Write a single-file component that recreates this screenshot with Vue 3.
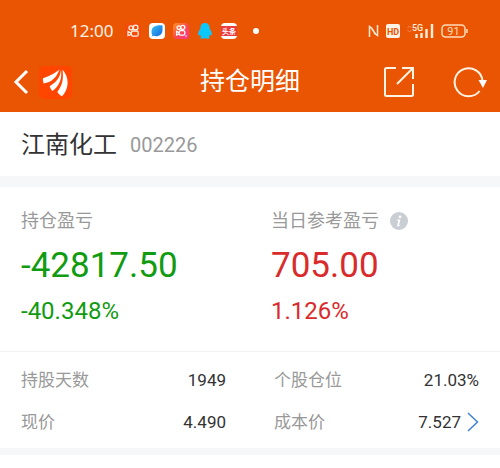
<template>
  <div class="page">
    <header class="header">
      <!-- 状态栏 -->
      <div class="status-bar">
        <div class="status-left">
          <span class="time">12:00</span>
          <div class="app-icons">
            <svg width="16" height="16" viewBox="0 0 16 16">
              <rect width="16" height="16" rx="4" fill="#f54a0c"/>
              <g fill="none" stroke="#fff0df" stroke-width="1.3">
                <circle cx="6" cy="4.8" r="2"/>
                <circle cx="10.6" cy="4.5" r="2.4"/>
                <rect x="6.4" y="8" width="6.8" height="5.2" rx="1.6"/>
                <path d="M6.2 10.2 3 8.6v4l3.2-1.2"/>
              </g>
            </svg>
            <svg width="16" height="16" viewBox="0 0 16 16">
              <defs>
                <linearGradient id="leaf" x1="0" y1="0" x2="1" y2="1">
                  <stop offset="0" stop-color="#35c4f5"/>
                  <stop offset="1" stop-color="#1763dc"/>
                </linearGradient>
              </defs>
              <rect width="16" height="16" rx="4" fill="#fff"/>
              <path d="M13.5 2.5C7 1.8 2.5 4 2.5 8.5c0 1.5.2 2.5.8 3.3l-.8 1.7 2-.7c4.8 1.5 8.5-.8 9-5.300z" fill="url(#leaf)"/>
            </svg>
            <svg width="16" height="16" viewBox="0 0 16 16">
              <defs>
                <linearGradient id="lite" x1="0" y1="0" x2="1" y2="1">
                  <stop offset="0" stop-color="#ff9420"/>
                  <stop offset=".55" stop-color="#fa4651"/>
                  <stop offset="1" stop-color="#f9369b"/>
                </linearGradient>
              </defs>
              <rect width="16" height="16" rx="4" fill="url(#lite)"/>
              <g fill="none" stroke="#fff" stroke-width="1.3">
                <circle cx="5.8" cy="4.7" r="1.8"/>
                <circle cx="9.8" cy="4.4" r="2.1"/>
                <rect x="6.2" y="7.6" width="5.6" height="4.6" rx="1.5"/>
                <path d="M6 9.700 3.600 8.300v3.800L6 11"/>
              </g>
              <circle cx="13" cy="13" r=".8" fill="#fff"/>
            </svg>
            <svg width="16" height="16" viewBox="0 0 16 16">
              <path d="M8 0C5 0 3.300 2.200 3.400 5.500 2 7.500.8 10 1.200 12.300c.3.700 1.100.1 1.800-.8.200 1 .6 1.700 1.200 2.300-1.500.8-1 2 .8 2 1.300 0 2.300-.2 3-.7.700.5 1.700.7 3 .7 1.800 0 2.300-1.200.8-2 .6-.6 1-1.300 1.200-2.300.7.900 1.500 1.500 1.800.8.400-2.300-.8-4.800-2.200-6.800C12.700 2.200 11 0 8 0z" fill="#0bc8fb"/>
            </svg>
            <svg width="16" height="16" viewBox="0 0 16 16">
              <rect width="16" height="16" rx="4" fill="#fff"/>
              <rect y="3" width="16" height="10" fill="#ec3b40"/>
              <text x="8" y="11" text-anchor="middle" class="news-text">头条</text>
            </svg>
          </div>
          <span class="dot"></span>
        </div>
        <div class="status-right">
          <svg width="11" height="14" viewBox="0 0 11 14" fill="none" stroke="#ffe9d3" stroke-width="1.5">
            <path d="M1.500 13V2.500l2 1.500 4 6.500M9.500 1v10.500l-2-1.500-4-6"/>
          </svg>
          <svg width="14" height="14" viewBox="0 0 14 14">
            <rect width="14" height="14" rx="2" fill="#fff3e6"/>
            <text x="7" y="11" text-anchor="middle" class="hd-text">HD</text>
          </svg>
          <svg width="27" height="16" viewBox="0 0 27 16">
            <path d="M.5 5l2-2 2 2M.5 7l2 2 2-2" fill="none" stroke="#f08a4c" stroke-width="1"/>
            <text x="5" y="8" class="net-text">5G</text>
            <path d="M9.500 11v4M14.500 10v5M19.500 6v9M25 1v14" fill="none" stroke="#ffeeda" stroke-width="2.400"/>
          </svg>
          <svg width="27" height="14" viewBox="0 0 27 14">
            <rect x="1" y="1" width="23" height="12" rx="3.5" fill="none" stroke="#ffdcb8" stroke-width="1.5"/>
            <path d="M26 5v4" stroke="#ffdcb8" stroke-width="1.5"/>
            <text x="12.5" y="11" text-anchor="middle" class="battery-text">91</text>
          </svg>
        </div>
      </div>

      <!-- 导航栏 -->
      <div class="nav-bar">
        <div class="nav-side">
          <button type="button" class="icon-btn" aria-label="返回">
            <svg width="16" height="26" viewBox="0 0 16 26" fill="none" stroke="#fff" stroke-width="3">
              <path d="M14 2 3 13l11 11"/>
            </svg>
          </button>
          <svg width="33" height="33" viewBox="0 0 33 33">
            <rect width="33" height="33" rx="5" fill="#ff4500"/>
            <g fill="#fff">
              <path d="M20.500 3.500C14 8.500 9.500 10.500 4 12.200c-.3 1.800 0 3.300.7 5.200C12.500 16.500 17.500 11.500 20.500 3.500z"/>
              <path d="M22 3.500c-.8 8-4.500 12.500-11.300 16.700.5 1.800 1.300 3.300 2.800 4.800C20.500 20 23.300 12.500 22 3.500z"/>
              <path d="M23.500 3.500c1.300 9.500-.2 16-5.200 22.500 1.200 1.800 2.800 3.300 4.800 4.200C30.300 22.500 30.500 11.500 23.500 3.500z"/>
            </g>
          </svg>
        </div>
        <h1 class="nav-title">持仓明细</h1>
        <div class="nav-side nav-actions">
          <button type="button" class="icon-btn" aria-label="分享">
            <svg width="32" height="32" viewBox="0 0 32 32" fill="none" stroke="#fff3e4" stroke-width="2">
              <path d="M13 2H3.500Q2 2 2 3.500v25Q2 30 3.500 30h25q1.500 0 1.500-1.500V18M14 18 30 2M19 2h11v11"/>
            </svg>
          </button>
          <button type="button" class="icon-btn" aria-label="刷新">
            <svg width="34" height="32" viewBox="0 0 34 32">
              <path d="M26.600 25A14 14 0 1 1 29.600 15" fill="none" stroke="#fff3e4" stroke-width="2"/>
              <path d="M25.500 14h8.500l-4 8z" fill="#fff"/>
            </svg>
          </button>
        </div>
      </div>
    </header>

    <section class="stock">
      <h2 class="stock-name">{{ stock.name }}</h2>
      <span class="stock-code">{{ stock.code }}</span>
    </section>

    <main class="position">
      <!-- 盈亏 -->
      <div class="summary">
        <div v-for="item in summary" :key="item.label" class="summary-item" :class="item.trend">
          <div class="summary-label">
            <span>{{ item.label }}</span>
            <button v-if="item.info" type="button" class="icon-btn" aria-label="说明">
              <svg width="18" height="18" viewBox="0 0 18 18">
                <circle cx="9" cy="9" r="9" fill="#c9cdd4"/>
                <circle cx="10" cy="4.8" r="1.4" fill="#fff"/>
                <path d="M7 7.500h3.400L9 13.300l1.500-.6-.3.900q-1.500 1.200-3.200.9l1.300-5.900H6.800z" fill="#fff"/>
              </svg>
            </button>
          </div>
          <div class="amount">{{ item.amount }}</div>
          <div class="percent">{{ item.percent }}</div>
        </div>
      </div>

      <!-- 明细 -->
      <dl class="details">
        <div v-for="item in details" :key="item.label" class="detail">
          <dt>{{ item.label }}</dt>
          <dd>
            {{ item.value }}
            <button v-if="item.more" type="button" class="icon-btn" aria-label="查看成本价">
              <svg width="12" height="20" viewBox="0 0 12 20" fill="none" stroke="#3f82d2" stroke-width="1.5">
                <path d="M1 1l9.500 9L1 19"/>
              </svg>
            </button>
          </dd>
        </div>
      </dl>
    </main>
  </div>
</template>

<script setup>
import { ref } from 'vue'

const stock = ref({ name: '江南化工', code: '002226' })

const summary = ref([
  { label: '持仓盈亏', amount: '-42817.50', percent: '-40.348%', trend: 'down' },
  { label: '当日参考盈亏', amount: '705.00', percent: '1.126%', trend: 'up', info: true },
])

const details = ref([
  { label: '持股天数', value: '1949' },
  { label: '个股仓位', value: '21.03%' },
  { label: '现价', value: '4.490' },
  { label: '成本价', value: '7.527', more: true },
])
</script>

<style>
body {
  margin: 0;
  background: #fff;
}
</style>

<style scoped>
.page {
  font-family: Roboto, "Noto Sans CJK SC", sans-serif;
  color: #333;
}

svg {
  display: block;
}

.icon-btn {
  padding: 0;
  border: none;
  background: none;
  cursor: pointer;
}

.header {
  padding-bottom: 10px;
  background: #ea5504;
  color: #fff;
}

/* 状态栏 */
.status-bar {
  display: flex;
  justify-content: space-between;
  align-items: center;
  height: 62px;
  padding: 0 32px 0 70px;
}

.status-left,
.status-right,
.app-icons {
  display: flex;
  align-items: center;
  gap: 8px;
}

.status-left {
  gap: 12px;
}

.status-right {
  gap: 7px;
}

.time {
  font-family: "Noto Sans", sans-serif;
  font-size: 17px;
  line-height: 20px;
  color: #fff3e4;
}

.dot {
  width: 6px;
  height: 6px;
  margin-left: 4px;
  border-radius: 50%;
  background: #fff;
}

.news-text {
  font-size: 7px;
  font-weight: bold;
  fill: #fff;
}

.hd-text {
  font-size: 9px;
  font-weight: bold;
  fill: #ea5504;
}

.net-text {
  font-size: 9px;
  font-weight: 500;
  fill: #ffeeda;
}

.battery-text {
  font-size: 11px;
  fill: #ffdcb8;
}

/* 导航栏 */
.nav-bar {
  display: grid;
  grid-template-columns: 1fr auto 1fr;
  align-items: center;
  height: 40px;
  padding: 0 13px;
}

.nav-side {
  display: flex;
  align-items: center;
  gap: 10px;
}

.nav-actions {
  justify-content: flex-end;
  gap: 38px;
}

.nav-title {
  margin: 0;
  font-size: 25px;
  line-height: 36px;
  font-weight: 400;
}

/* 股票名称 */
.stock {
  display: flex;
  align-items: center;
  gap: 13px;
  padding: 15px 21px 13px;
}

.stock-name {
  margin: 0;
  font-size: 24px;
  line-height: 36px;
  font-weight: 400;
}

.stock-code {
  font-size: 20px;
  color: #999;
}

.position {
  border-top: 11px solid #f6f7f9;
  border-bottom: 7px solid #f6f7f9;
}

.summary {
  display: grid;
  grid-template-columns: 1fr 1fr;
  gap: 42px;
  padding: 20px 21px 24px;
}

.summary-label {
  display: flex;
  align-items: center;
  gap: 11px;
  font-size: 18px;
  line-height: 28px;
  color: #999;
}

.amount {
  margin-top: 11px;
  font-size: 35px;
  line-height: 40px;
}

.percent {
  margin-top: 9px;
  font-size: 24px;
  line-height: 32px;
}

.down {
  color: #119b11;
}

.up {
  color: #d92b2b;
}

.details {
  display: grid;
  grid-template-columns: 1fr 1fr;
  gap: 14px 48px;
  margin: 0;
  padding: 14px 21px 12px;
  border-top: 1px solid #f3f3f3;
}

.detail {
  display: flex;
  justify-content: space-between;
  align-items: center;
  font-size: 17px;
  line-height: 28px;
}

.detail dt {
  color: #999;
}

.detail dd {
  display: flex;
  align-items: center;
  gap: 6px;
  margin: 0;
}
</style>
